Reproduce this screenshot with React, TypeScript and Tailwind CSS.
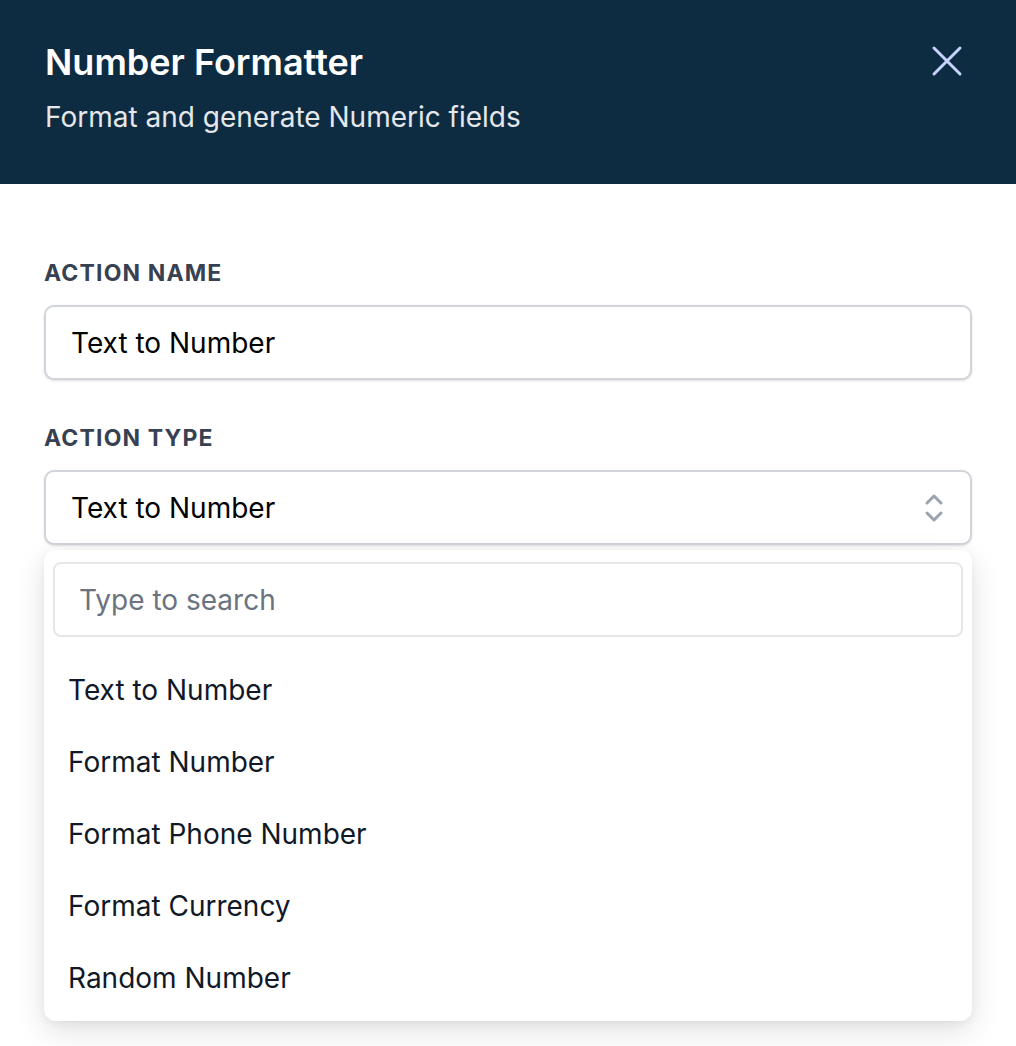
import React from 'react';

const options = [
  'Text to Number',
  'Format Number',
  'Format Phone Number',
  'Format Currency',
  'Random Number',
];

const ChevronUpDown = () => (
  <svg
    width="20"
    height="30"
    viewBox="0 0 20 30"
    fill="none"
    stroke="#9ca3af"
    strokeWidth="3"
    strokeLinecap="round"
    strokeLinejoin="round"
  >
    <path d="M3 10l7-7 7 7" />
    <path d="M3 20l7 7 7-7" />
  </svg>
);

export default function App() {
  return (
    <div className="flex min-h-[1046px] w-[1016px] flex-col bg-white font-['Inter',sans-serif]">
      <div className="flex h-[184px] items-start justify-between bg-[#0d2c42] px-[45px] pt-[40px]">
        <div className="flex flex-col">
          <h1 className="text-[36px] leading-[44px] font-semibold text-white">
            Number Formatter
          </h1>
          <p className="mt-[15px] text-[28px] leading-[36px] text-[#e5e7eb]">
            Format and generate Numeric fields
          </p>
        </div>
        <button className="mt-[5px] mr-[8px] flex h-[32px] w-[32px] items-center justify-center">
          <svg
            width="32"
            height="32"
            viewBox="0 0 32 32"
            fill="none"
            stroke="#c7d2fe"
            strokeWidth="3"
            strokeLinecap="round"
          >
            <path d="M3 3l26 26M29 3L3 29" />
          </svg>
        </button>
      </div>

      <div className="flex flex-col px-[44px] pt-[73px]">
        <label className="text-[23px] leading-[32px] font-bold tracking-[0.05em] text-[#374151]">
          ACTION NAME
        </label>
        <div className="mt-[16px] flex h-[75px] items-center rounded-[10px] border-2 border-[#d1d5db] bg-white px-[25px] shadow-sm">
          <span className="text-[28px] text-black">Text to Number</span>
        </div>

        <label className="mt-[42px] text-[23px] leading-[32px] font-bold tracking-[0.05em] text-[#374151]">
          ACTION TYPE
        </label>
        <div className="mt-[16px] flex h-[75px] items-center justify-between rounded-[10px] border-2 border-[#d1d5db] bg-white pr-[26px] pl-[25px] shadow-sm">
          <span className="text-[28px] text-black">Text to Number</span>
          <ChevronUpDown />
        </div>

        <div className="mt-[5px] flex flex-col rounded-[12px] bg-white px-[9px] pt-[12px] pb-[7px] shadow-[0_10px_30px_rgba(0,0,0,0.12),0_2px_8px_rgba(0,0,0,0.05)]">
          <div className="flex h-[75px] items-center rounded-[8px] border-2 border-[#e5e7eb] px-[24px]">
            <span className="text-[28px] text-[#6b7280]">Type to search</span>
          </div>
          <ul className="mt-[17px] flex flex-col">
            {options.map((o) => (
              <li
                key={o}
                className="flex h-[72px] items-center px-[15px] text-[28px] text-[#111827]"
              >
                {o}
              </li>
            ))}
          </ul>
        </div>
      </div>
    </div>
  );
}
